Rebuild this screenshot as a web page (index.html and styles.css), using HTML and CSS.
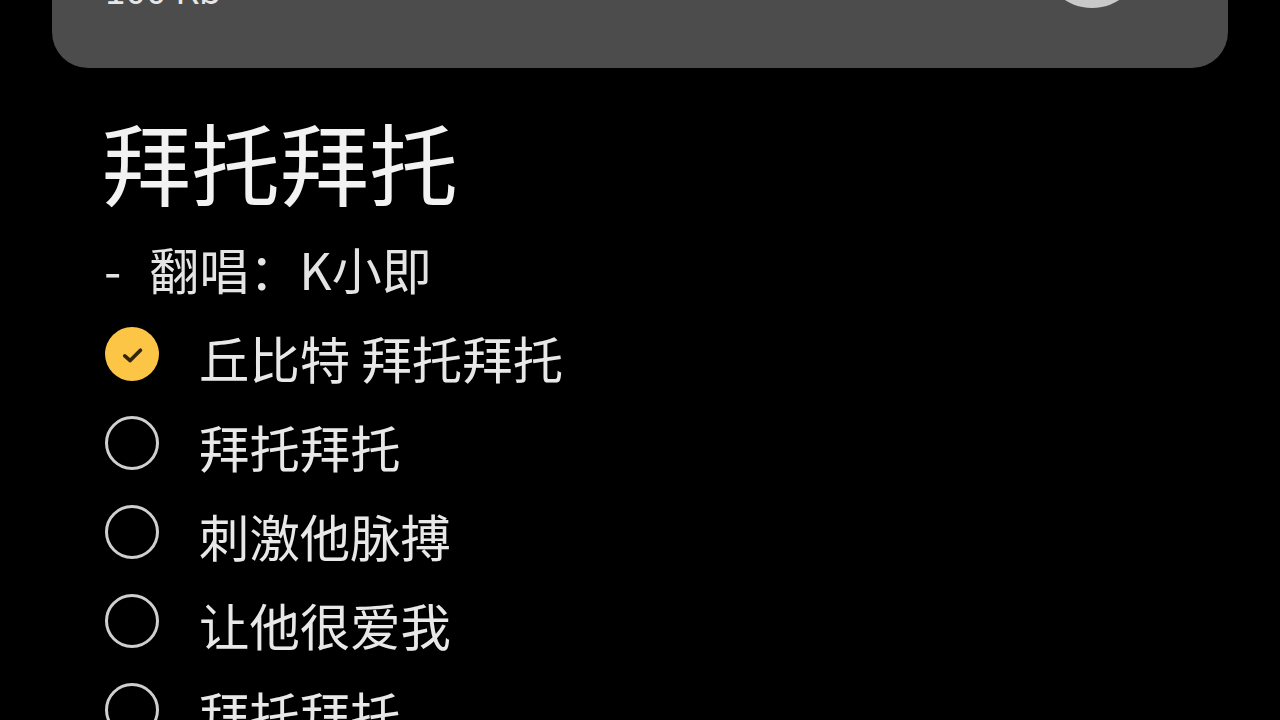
FILE: index.html
```html
<!DOCTYPE html>
<html lang="zh-CN">
<head>
<meta charset="utf-8">
<title>拜托拜托</title>
<link rel="stylesheet" href="styles.css">
</head>
<body>
<main class="page">
  <section class="card">
    <span class="size">100 Kb</span>
    <span class="knob"></span>
  </section>
  <h1 class="title">拜托拜托</h1>
  <p class="sub"><span class="dash">-</span>翻唱：K小即</p>
  <ul class="list">
    <li class="row"><span class="radio on"><svg viewBox="0 0 54 54" class="tick"><path d="M19.8 28.8l5.4 4.8 10.2-10.4"/></svg></span><span class="label">丘比特 拜托拜托</span></li>
    <li class="row"><span class="radio"></span><span class="label">拜托拜托</span></li>
    <li class="row"><span class="radio"></span><span class="label">刺激他脉搏</span></li>
    <li class="row"><span class="radio"></span><span class="label">让他很爱我</span></li>
    <li class="row"><span class="radio"></span><span class="label">拜托拜托</span></li>
  </ul>
</main>
</body>
</html>
```
FILE: styles.css
```css
* { box-sizing: border-box; }
html, body { margin: 0; height: 100%; background: #000; overflow: hidden; }
.page {
  width: 1280px;
  height: 720px;
  overflow: hidden;
  padding: 0 52px;
  color: #f2f2f2;
  font-family: "Noto Sans CJK SC", "Noto Sans", sans-serif;
  font-weight: 400;
  filter: blur(0.5px);
}
.card {
  height: 68px;
  background: #4c4c4c;
  border-radius: 0 0 36px 36px;
  padding: 0 86px 0 53px;
  display: flex;
  justify-content: space-between;
  align-items: flex-end;
  overflow: hidden;
}
.size {
  font-size: 37px;
  line-height: 37px;
  margin-bottom: 61px;
  color: #e6e6e6;
}
.knob {
  width: 100px;
  height: 100px;
  border-radius: 50%;
  background: #c9c9c9;
  margin-bottom: 60px;
}
.title {
  margin: 43px 0 0 50px;
  font-size: 89px;
  line-height: 100px;
  font-weight: 400;
}
.sub {
  margin: 32px 0 0 52px;
  font-size: 50px;
  line-height: 50px;
  color: #e4e4e4;
}
.dash { margin-right: 28px; }
.list {
  list-style: none;
  margin: 16px 0 0 53px;
  padding: 0;
}
.row {
  height: 89px;
  display: flex;
  align-items: center;
  gap: 40px;
}
.radio {
  width: 54px;
  height: 54px;
  flex: none;
  border-radius: 50%;
  border: 3px solid #cfcfcf;
}
.radio.on {
  background: #fcc546;
  border: 0;
}
.tick { display: block; width: 54px; height: 54px; }
.tick path { fill: none; stroke: #33240c; stroke-width: 3.6; stroke-linecap: round; stroke-linejoin: round; }
.label {
  font-size: 50.4px;
  line-height: 60px;
  padding-top: 8px;
  color: #e8e8e8;
}
```
